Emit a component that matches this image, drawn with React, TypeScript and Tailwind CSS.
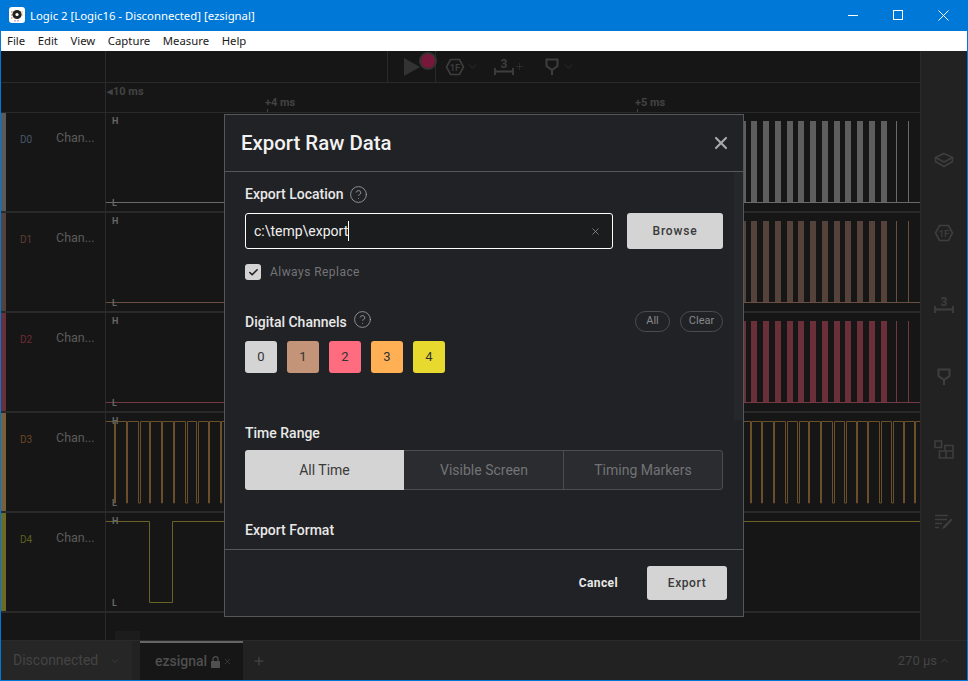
import React from "react";
import { Check, ChevronDown, ChevronUp, CircleHelp, Plus, X } from "lucide-react";

const BARS = [751, 763, 775, 787, 798, 810, 822, 834, 845, 857, 869, 881];
const OUTLINED = [2, 6, 7, 11, 12, 16, 17, 21, 22, 26, 27, 31, 32, 36, 37, 41, 42, 46, 47, 51, 52, 57, 58, 61, 62, 65, 66];

interface ChannelRow {
  id: string;
  strip: string;
  label: string;
  wave: string;
  bar: string;
}

const CHANNELS: ChannelRow[] = [
  { id: "D0", strip: "bg-[#5a5a5a]", label: "text-[#46586a]", wave: "#6a6a6a", bar: "#5e5e5e" },
  { id: "D1", strip: "bg-[#55423a]", label: "text-[#5a3f30]", wave: "#6a4e40", bar: "#55423a" },
  { id: "D2", strip: "bg-[#6a2f38]", label: "text-[#6e2c36]", wave: "#743842", bar: "#6a2f38" },
  { id: "D3", strip: "bg-[#7a6038]", label: "text-[#6b4626]", wave: "#6b4f2a", bar: "#6b4f2a" },
  { id: "D4", strip: "bg-[#6e6a24]", label: "text-[#5c6020]", wave: "#6b6323", bar: "#6b6323" },
];

// y values below are relative to the top of the row's plot
const BarsWave = ({ wave, bar }: { wave: string; bar: string }) => (
  <>
    <line x1="0" x2="814" y1="89.5" y2="89.5" stroke={wave} />
    <rect x={638} y="8" width="2" height="81" fill={bar} />
    {BARS.map((x) => (
      <rect key={x} x={x - 106} y="8" width="6" height="81" fill={bar} />
    ))}
    <rect x={790} y="8" width="1" height="81" fill={wave} />
    <rect x={802} y="8" width="1" height="81" fill={wave} />
  </>
);

const PulseWave = ({ wave }: { wave: string }) => {
  let d = "M0 8.5 H8";
  for (let i = 0; i < 69; i++) {
    const x = Math.round(8 + i * 11.77) + 0.5;
    const w = OUTLINED.includes(i) ? 2 : 1;
    d += ` H${x} V90 H${x + w} V8.5`;
  }
  d += " H814";
  return <path d={d} fill="none" stroke={wave} />;
};

const Plot = ({ index, wave, bar }: { index: number; wave: string; bar: string }) => (
  <svg width="814" height="98" className="block">
    {index < 3 && <BarsWave wave={wave} bar={bar} />}
    {index === 3 && <PulseWave wave={wave} />}
    {index === 4 && <path d="M0 8.5 H43.5 V89.5 H66.5 V8.5 H814" fill="none" stroke={wave} />}
  </svg>
);

const HexIcon = ({ className }: { className: string }) => (
  <svg width="20" height="18" viewBox="0 0 20 18" className={className}>
    <path d="M5.5 1.5 H14.5 L18.5 9 L14.5 16.5 H5.5 L1.5 9 Z" fill="none" stroke="currentColor" strokeWidth="1.6" />
    <text x="10" y="12.5" textAnchor="middle" fontSize="9.5" fontFamily="Roboto, sans-serif" fontWeight="500" fill="currentColor">
      1F
    </text>
  </svg>
);

const MeasureIcon = ({ className }: { className: string }) => (
  <svg width="20" height="18" viewBox="0 0 20 18" className={className}>
    <text x="10" y="9.5" textAnchor="middle" fontSize="12" fontFamily="Roboto, sans-serif" fontWeight="700" fill="currentColor">
      3
    </text>
    <path d="M1 10 V17 M19 10 V17 M1 13.5 H19" fill="none" stroke="currentColor" strokeWidth="1.8" />
  </svg>
);

const MarkerIcon = ({ className }: { className: string }) => (
  <svg width="14" height="18" viewBox="0 0 14 18" className={className}>
    <path d="M1.5 1.5 H12.5 V8 L7 12 L1.5 8 Z M7 12 V17" fill="none" stroke="currentColor" strokeWidth="2" />
  </svg>
);

const LayersIcon = ({ className }: { className: string }) => (
  <svg width="20" height="16" viewBox="0 0 20 16" className={className}>
    <path d="M10 1.5 L18.5 5.5 V9.5 L10 14.5 L1.5 9.5 V5.5 Z M1.5 5.5 L10 10 L18.5 5.5" fill="none" stroke="currentColor" strokeWidth="1.6" />
  </svg>
);

const BlocksIcon = ({ className }: { className: string }) => (
  <svg width="20" height="19" viewBox="0 0 20 19" className={className}>
    <path d="M1 1 H7.5 V7.5 H1 Z M5.5 11 V18 H19 V5.5 H11 V11 Z M12 11 H19 M12 11 V18" fill="none" stroke="currentColor" strokeWidth="1.6" />
  </svg>
);

const NotesIcon = ({ className }: { className: string }) => (
  <svg width="18" height="16" viewBox="0 0 18 16" className={className}>
    <path d="M0 1.5 H13 M0 5.5 H12 M0 9.5 H7 M0 13.5 H4" fill="none" stroke="currentColor" strokeWidth="1.6" />
    <path d="M16 4.5 L8.5 12 L7 15 L10 14 L17.5 6 Z" fill="currentColor" />
  </svg>
);

const LockIcon = () => (
  <svg width="9" height="12" viewBox="0 0 9 12" className="ml-[4px]">
    <path d="M2 5 V3.2 a2.5 2.5 0 0 1 5 0 V5" fill="none" stroke="currentColor" strokeWidth="1.3" />
    <rect x="0" y="5" width="9" height="7" rx="0.8" fill="currentColor" />
  </svg>
);

const AppLogo = () => (
  <svg width="16" height="16" viewBox="0 0 16 16" className="-mt-[2px]">
    <rect width="16" height="16" rx="3" fill="#fff" />
    <path d="M2 5 H3.5 M2 8 H3.5 M2 11 H3.5" stroke="#e2622c" strokeWidth="1" />
    <path d="M12.5 5 H14 M12.5 8 H14" stroke="#f2b233" strokeWidth="1" />
    <path d="M6 13 V14.5 M9 13 V14.5" stroke="#a05bc4" strokeWidth="1" />
    <circle cx="8" cy="7.5" r="4.6" fill="#222" />
    <circle cx="8" cy="7.5" r="1.6" fill="#fff" />
  </svg>
);

const WindowButtons = () => (
  <div className="-mt-[2px] ml-auto flex items-center gap-[35px] pr-[18px]">
    <svg width="10" height="10" viewBox="0 0 10 10">
      <path d="M0 5.5 H10" stroke="#fff" />
    </svg>
    <svg width="10" height="10" viewBox="0 0 10 10">
      <rect x="0.5" y="0.5" width="9" height="9" fill="none" stroke="#fff" />
    </svg>
    <svg width="11" height="11" viewBox="0 0 11 11">
      <path d="M0.5 0.5 L10.5 10.5 M10.5 0.5 L0.5 10.5" stroke="#fff" />
    </svg>
  </div>
);

const Help = () => <CircleHelp size={19} strokeWidth={1} className="text-[#a8a9ac]" />;

const SectionLabel = ({ children }: { children: React.ReactNode }) => (
  <span className="text-[14px] leading-5 font-medium text-[#e8e8e8]">{children}</span>
);

const ExportDialog = () => (
  <div className="absolute left-[223px] top-[113px] flex h-[503px] w-[520px] flex-col border border-[#56575b] bg-[#212225] font-['Roboto',sans-serif]">
    <div className="flex h-[57px] shrink-0 items-center justify-between border-b border-[#56575b] pl-4 pr-[12px]">
      <span className="text-[20.4px] font-medium text-[#f2f2f2]">Export Raw Data</span>
      <X size={20} strokeWidth={2.6} className="text-[#a9a9ac]" />
    </div>
    <div className="relative flex-1 overflow-hidden px-5 pt-[12px]">
      <div className="absolute right-0 top-0 h-[248px] w-[9px] bg-[#26272a]" />
      <div className="flex items-center gap-[5px]">
        <SectionLabel>Export Location</SectionLabel>
        <Help />
      </div>
      <div className="mt-[9px] flex gap-[14px]">
        <div className="flex h-9 w-[368px] items-center justify-between rounded-[3px] border border-white bg-[#1b1c1e] pl-2 pr-[11px]">
          <span className="border-r border-white pr-0 text-[14px] leading-[20px] text-[#f0f0f0]">c:\temp\export</span>
          <X size={11} strokeWidth={1.6} className="text-[#9a9a9d]" />
        </div>
        <button className="h-9 w-24 rounded-[3px] bg-[#d4d4d4] text-[12px] font-medium tracking-[0.8px] text-[#3a3a3a]">Browse</button>
      </div>
      <div className="mt-[14px] flex items-center gap-[9px]">
        <span className="flex size-4 items-center justify-center rounded-[3px] bg-[#d4d4d4]">
          <Check size={11} strokeWidth={3.5} className="text-[#222]" />
        </span>
        <span className="text-[12px] tracking-[0.45px] text-[#737478]">Always Replace</span>
      </div>
      <div className="mt-[30px] flex h-[21px] items-center justify-between">
        <div className="flex items-center gap-[6px]">
          <SectionLabel>Digital Channels</SectionLabel>
          <span className="-mt-[4px]">
            <Help />
          </span>
        </div>
        <div className="flex gap-[10px]">
          <span className="flex h-[21px] w-[35px] items-center justify-center rounded-full border border-[#4c4d50] text-[11px] text-[#88898c]">All</span>
          <span className="flex h-[21px] w-[43px] items-center justify-center rounded-full border border-[#4c4d50] text-[11px] text-[#88898c]">Clear</span>
        </div>
      </div>
      <div className="mt-[9px] flex gap-[10px]">
        {[
          ["0", "bg-[#d4d4d4]"],
          ["1", "bg-[#c39478]"],
          ["2", "bg-[#ff6b7f]"],
          ["3", "bg-[#ffb055]"],
          ["4", "bg-[#e8d92f]"],
        ].map(([n, bg]) => (
          <span key={n} className={`flex size-8 items-center justify-center rounded-[3px] text-[13px] text-[#333] ${bg}`}>
            {n}
          </span>
        ))}
      </div>
      <div className="mt-[50px] leading-5">
        <SectionLabel>Time Range</SectionLabel>
      </div>
      <div className="mt-[7px] flex h-10 w-[478px] overflow-hidden rounded-[3px] text-[14px]">
        <span className="flex w-[159px] items-center justify-center bg-[#d4d4d4] text-[#3a3a3a]">All Time</span>
        <span className="flex w-[160px] items-center justify-center border border-l-0 border-[#4c4d50] bg-[#2b2c2f] pl-px text-[#727377]">Visible Screen</span>
        <span className="flex w-[159px] items-center justify-center rounded-r-[3px] border border-l-0 border-[#4c4d50] bg-[#2b2c2f] text-[#727377]">Timing Markers</span>
      </div>
      <div className="mt-[30px] leading-5">
        <SectionLabel>Export Format</SectionLabel>
      </div>
    </div>
    <div className="flex h-[67px] shrink-0 items-center justify-end gap-[29px] border-t border-[#56575b] pr-4">
      <span className="text-[12px] font-bold tracking-[0.4px] text-[#e8e8e8]">Cancel</span>
      <button className="h-[34px] w-20 rounded-[3px] bg-[#d4d4d4] text-[12px] font-medium tracking-[0.6px] text-[#3a3a3a]">Export</button>
    </div>
  </div>
);

export default function App() {
  return (
    <div className="relative flex h-[681px] w-[968px] flex-col overflow-hidden border border-[#0078d7] bg-[#161616] font-['Roboto',sans-serif]">
      {/* window chrome */}
      <div className="flex h-[30px] shrink-0 items-center bg-[#0078d7] pl-2 font-['Noto_Sans',sans-serif] text-[11.35px] text-white">
        <AppLogo />
        <span className="ml-[5px]">Logic 2 [Logic16 - Disconnected] [ezsignal]</span>
        <WindowButtons />
      </div>
      <div className="flex h-5 shrink-0 items-center gap-[12.5px] bg-white pl-[6px] font-['Noto_Sans',sans-serif] text-[11.35px] text-[#1a1a1a]">
        {["File", "Edit", "View", "Capture", "Measure", "Help"].map((m) => (
          <span key={m}>{m}</span>
        ))}
      </div>

      <div className="flex h-[589px] shrink-0">
        <div className="flex w-[919px] flex-col">
          {/* toolbar */}
          <div className="flex h-8 shrink-0 border-b border-[#2a2a2a] text-[#3a3a3a]">
            <div className="w-[105px] border-r border-[#2a2a2a]" />
            <div className="ml-[281px] flex w-[49px] items-center border-x border-[#2a2a2a] pl-4">
              <span className="relative block size-0 border-y-[9px] border-l-[16px] border-y-transparent border-l-[#333]" />
              <span className="absolute left-[418px] top-[51px] size-[18px] rounded-full border-2 border-[#333] bg-[#77183a]" />
            </div>
            <div className="flex items-center pl-[9px]">
              <HexIcon className="text-[#3e3e3e]" />
              <ChevronDown size={13} strokeWidth={1.2} className="ml-[1px]" />
              <MeasureIcon className="ml-[15px] text-[#3e3e3e]" />
              <Plus size={11} strokeWidth={1.2} />
              <MarkerIcon className="ml-[20px] text-[#3e3e3e]" />
              <ChevronDown size={13} strokeWidth={1.2} className="ml-[3px]" />
            </div>
          </div>
          {/* ruler */}
          <div className="relative h-[30px] shrink-0 border-b border-[#2a2a2a] text-[11px] font-bold text-[#434343]">
            <div className="absolute bottom-0 left-[104px] top-0 w-px bg-[#2a2a2a]" />
            <span className="absolute left-[106px] top-[1px]">◂10 ms</span>
            <span className="absolute left-[264px] top-[12px]">+4 ms</span>
            <span className="absolute left-[634px] top-[12px]">+5 ms</span>
            <div className="absolute bottom-0 left-[266px] h-[3px] w-px bg-[#434343]" />
            <div className="absolute bottom-0 left-[636px] h-[3px] w-px bg-[#434343]" />
          </div>
          {/* channels */}
          {CHANNELS.map((c, i) => (
            <div key={c.id} className="flex h-[100px] shrink-0 border-b-2 border-[#2a2a2a]">
              <div className={`w-[5px] shrink-0 ${c.strip}`} />
              <div className="flex w-[100px] shrink-0 items-start border-r border-[#2a2a2a] pl-[14px] pt-[17px]">
                <span className={`mt-[4px] w-[36px] text-[10px] leading-[12px] ${c.label}`}>{c.id}</span>
                <span className="text-[12.5px] leading-[15px] text-[#5c5c5c]">Chan...</span>
              </div>
              <div className="relative flex-1">
                <Plot index={i} wave={c.wave} bar={c.bar} />
                <span className="absolute left-[6px] top-[3px] text-[9px] leading-[10px] font-bold text-[#666]">H</span>
                <span className="absolute left-[6px] top-[85px] text-[9px] leading-[10px] font-bold text-[#666]">L</span>
              </div>
            </div>
          ))}
          <div className="relative flex-1">
            <div className="absolute bottom-0 left-[104px] top-0 w-px bg-[#2a2a2a]" />
            <div className="absolute bottom-0 left-[114px] h-[9px] w-[25px] bg-[#1c1c1c]" />
          </div>
        </div>
        <div className="flex w-[47px] flex-col items-center border-l border-[#2a2a2a] bg-[#222] pt-[101px] text-[#3e3e3e]">
          <LayersIcon className="" />
          <HexIcon className="mt-[56px]" />
          <MeasureIcon className="mt-[54px]" />
          <MarkerIcon className="mt-[54px]" />
          <BlocksIcon className="mt-[54px]" />
          <NotesIcon className="mt-[55px]" />
        </div>
      </div>

      {/* bottom tabs */}
      <div className="flex flex-1 items-stretch border-t border-[#2a2a2a] bg-[#222]">
        <div className="flex w-[131px] items-center bg-[#262626] pl-3 text-[14px] text-[#444]">
          Disconnected
          <ChevronDown size={12} strokeWidth={1.2} className="ml-[11px]" />
        </div>
        <div className="ml-2 flex w-[103px] items-center border-t-2 border-[#666] bg-[#161616] pl-[15px] text-[#4f4f4f]">
          <span className="text-[14px] font-medium">ezsignal</span>
          <LockIcon />
          <X size={9} strokeWidth={1.6} className="ml-[3px]" />
        </div>
        <div className="ml-[9px] flex items-center text-[#4a4a4a]">
          <Plus size={14} strokeWidth={1.8} />
        </div>
        <div className="ml-auto flex items-center gap-[2px] pr-[17px] text-[13px] text-[#444]">
          270 µs
          <ChevronUp size={11} strokeWidth={2} />
        </div>
      </div>

      <ExportDialog />
    </div>
  );
}
